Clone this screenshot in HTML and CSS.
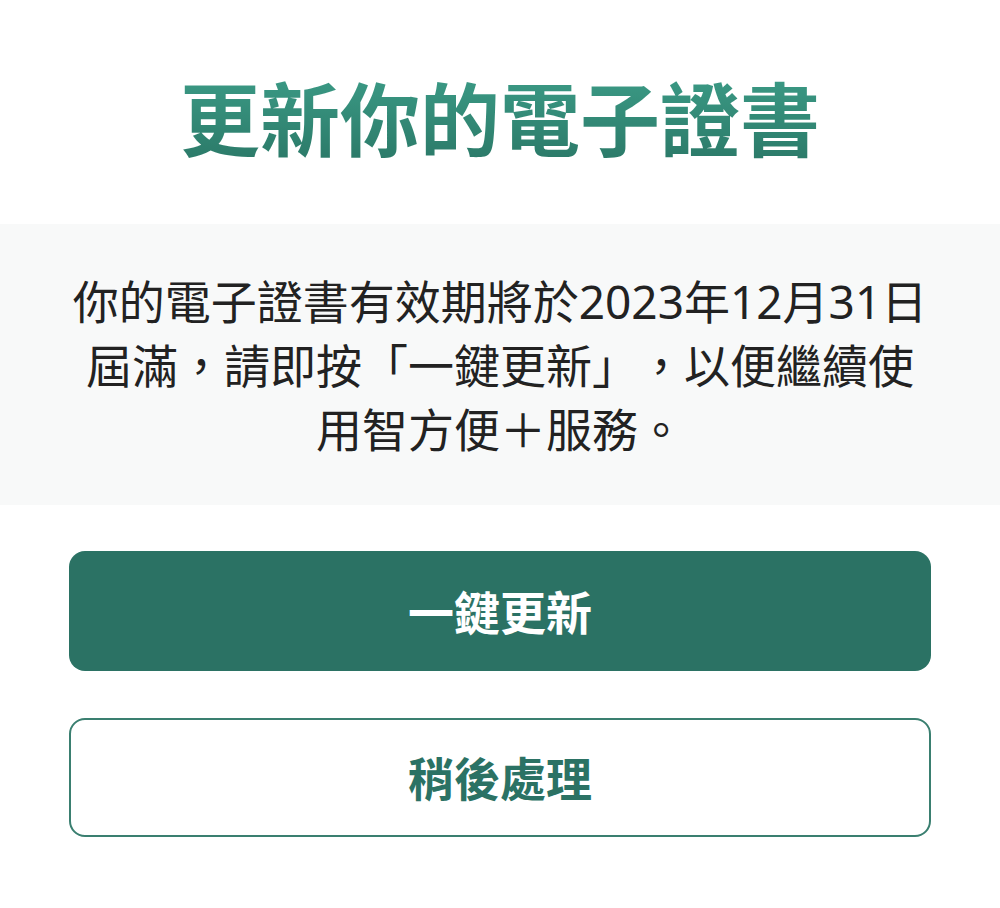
FILE: index.html
```html
<!DOCTYPE html>
<html lang="zh-Hant">
<head>
  <meta charset="UTF-8" />
  <meta name="viewport" content="width=device-width, initial-scale=1.0"/>
  <title>更新你的電子證書</title>
  <link rel="stylesheet" href="styles.css">
</head>
<body>

  <div class="page">
    <h1 class="title">更新你的電子證書</h1>

    <div class="notice">
      <p>你的電子證書有效期將於2023年12月31日<br>屆滿，請即按「一鍵更新」，以便繼續使<br>用智方便＋服務。</p>
    </div>

    <div class="actions">
      <button class="btn primary">一鍵更新</button>
      <button class="btn secondary">稍後處理</button>
    </div>
  </div>

</body>
</html>
```

FILE: styles.css
```css
body {
  font-family: "Noto Sans", "Noto Sans CJK TC", sans-serif;
  background-color: #fff;
  margin: 0;
}

.page {
  padding-top: 69px;
}

.title {
  margin: 0 0 55px;
  text-align: center;
  font-size: 80px;
  font-weight: 700;
  line-height: 100px;
  background: linear-gradient(180deg, #3c9c87 0%, #2a7766 100%);
  -webkit-background-clip: text;
  background-clip: text;
  color: transparent;
}

.notice {
  background: #f8f9f9;
  padding: 45px 20px 44px;
}

.notice p {
  margin: 0;
  text-align: center;
  font-size: 46px;
  line-height: 64px;
  color: #222;
  text-spacing-trim: space-all;
  font-feature-settings: "chws" 0, "halt" 0;
}

.actions {
  display: flex;
  flex-direction: column;
  gap: 47px;
  padding: 46px 69px 0;
}

.btn {
  font-family: inherit;
  font-size: 46px;
  font-weight: 700;
  height: 120px;
  padding-bottom: 4px;
  border-radius: 16px;
  cursor: pointer;
}

.primary {
  background: #2b7264;
  color: #fff;
  border: none;
}

.secondary {
  background: #fff;
  color: #2b7264;
  border: 2px solid #3a7f70;
  height: 119px;
}
```
